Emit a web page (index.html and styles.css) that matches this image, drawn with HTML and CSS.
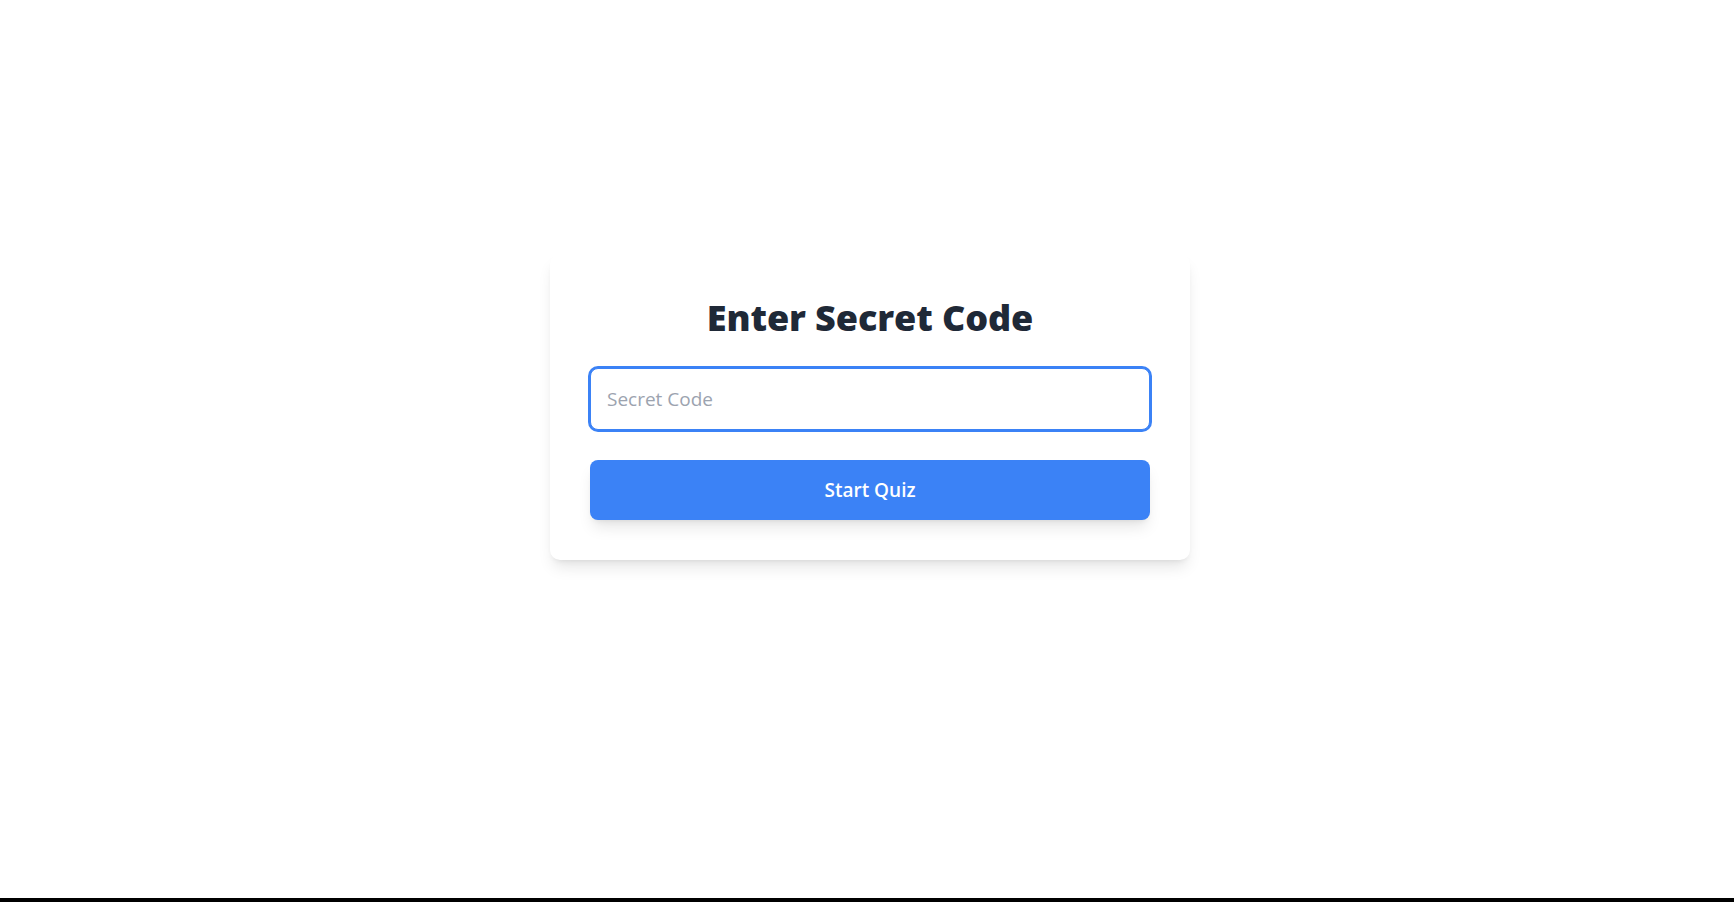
FILE: index.html
```html
<!DOCTYPE html>
<html lang="en">
<head>
<meta charset="utf-8">
<title>Enter Secret Code</title>
<link rel="stylesheet" href="styles.css">
</head>
<body>
<main class="page">
  <section class="card">
    <h1 class="title">Enter Secret Code</h1>
    <input class="code-input" type="text" placeholder="Secret Code" autofocus>
    <button class="start-btn" type="button">Start Quiz</button>
  </section>
</main>
<div class="bottom-bar"></div>
</body>
</html>
```
FILE: styles.css
```css
* { box-sizing: border-box; }
html, body { margin: 0; padding: 0; height: 100%; }
body {
  background: #ffffff;
  font-family: "Open Sans", "Noto Sans", sans-serif;
  display: flex;
  flex-direction: column;
  min-height: 100vh;
}
.page {
  flex: 1;
  display: flex;
  justify-content: center;
  align-items: flex-start;
  padding-top: 254px;
  padding-left: 6px;
}
.card {
  width: 640px;
  background: #ffffff;
  border-radius: 10px;
  padding: 40px;
  box-shadow: 0 10px 15px -3px rgba(0,0,0,0.1), 0 4px 6px -4px rgba(0,0,0,0.1);
  display: flex;
  flex-direction: column;
}
.title {
  margin: 0 0 30px 0;
  padding-top: 4px;
  text-align: center;
  font-size: 36px;
  line-height: 40px;
  font-weight: 800;
  color: #1f2937;
  letter-spacing: -0.1px;
}
.code-input {
  width: 100%;
  height: 62px;
  padding: 0 16px;
  font-family: inherit;
  font-size: 19px;
  color: #1f2937;
  border: 1px solid #3b82f6;
  border-radius: 8px;
  box-shadow: 0 0 0 2px #3b82f6;
  outline: none;
  margin: 0 0 30px 0;
  background: #ffffff;
}
.code-input::placeholder { color: #9ca3af; }
.start-btn {
  width: 100%;
  height: 60px;
  border: none;
  border-radius: 8px;
  background: #3b82f6;
  color: #ffffff;
  font-family: inherit;
  font-size: 19px;
  font-weight: 600;
  box-shadow: 0 10px 15px -3px rgba(0,0,0,0.1), 0 4px 6px -4px rgba(0,0,0,0.1);
  cursor: pointer;
}
.bottom-bar {
  height: 4px;
  background: #000000;
  flex: none;
}
```
